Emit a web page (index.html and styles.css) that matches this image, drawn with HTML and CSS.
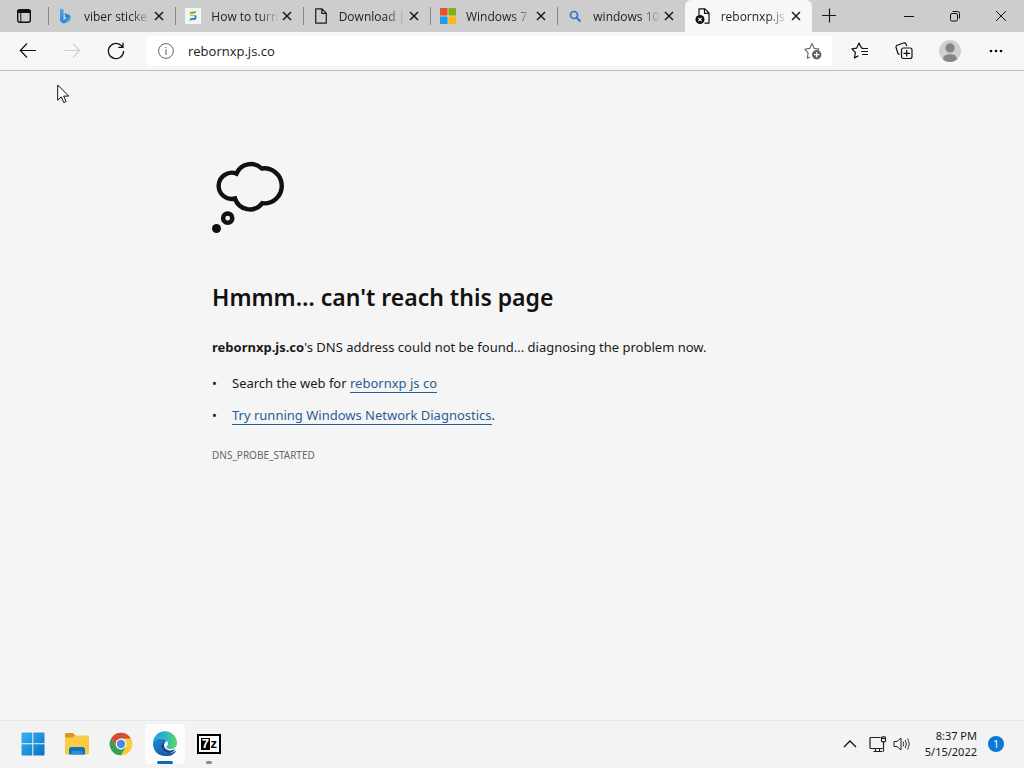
FILE: index.html
```
<!DOCTYPE html>
<html lang="en">
<head>
  <meta charset="UTF-8">
  <meta name="viewport" content="width=device-width, initial-scale=1">
  <title>rebornxp.js.co</title>
  <link rel="stylesheet" href="styles.css">
</head>
<body>

  <!-- Shared icons -->
  <svg class="sprite" aria-hidden="true">
    <symbol id="x" viewBox="0 0 10 10"><path d="M1 1l8 8M9 1l-8 8" fill="none" stroke="#1a1a1a" stroke-width="1.5"/></symbol>
  </svg>

  <!-- Tab strip -->
  <header class="tab-strip">
    <button class="tab-actions" aria-label="Tab actions">
      <svg width="16" height="16" viewBox="0 0 16 16"><rect x="1.7" y="1.7" width="12.6" height="12.6" rx="2" fill="none" stroke="#111" stroke-width="1.4"/><path d="M1.5 2.5h13v2h-13zM4.8 5v9" fill="#111" stroke="#111" stroke-width="1"/></svg>
    </button>

    <nav class="tabs">
      <div class="tab">
        <svg class="favicon" viewBox="0 0 16 16">
          <defs><linearGradient id="bing" x1="0" y1="0" x2="1" y2="1"><stop offset="0" stop-color="#4aaef2"/><stop offset=".6" stop-color="#1f83e4"/><stop offset="1" stop-color="#4fd0ee"/></linearGradient></defs>
          <path d="M2 .5l3.500 1.200v9.800L3 13.400l-1-.8zM6.500 5l4.700 1.700c1.600.8 2 2.800 1.300 4.500-.6 1.600-2 2.300-3.400 3.100-1.700 1-2.700 1.400-4.100 1l-2.500-1.700 4.600-2.400 1.500-1.300-1.500-1.200z" fill="url(#bing)"/>
        </svg>
        <a class="tab-title" href="#">viber sticke</a>
        <button class="tab-close" aria-label="Close tab"><svg width="10" height="10"><use href="#x"/></svg></button>
      </div>
      <div class="tab">
        <svg class="favicon" viewBox="0 0 16 16"><path d="M0 0h16v16H0z" fill="#f3f5f3"/><path d="M5 4l6-.8-.5 2-5 .8z" fill="#46b26b"/><path d="M4.200 5l1.800-.5-.5 2.200 5 .3.800 1.500-6-.5z" fill="#f5ad2b"/><path d="M10.200 7l1.500 1-.7 3.500-6.500 1 .5-2 4.500-.7z" fill="#2485d0"/></svg>
        <a class="tab-title" href="#">How to turn</a>
        <button class="tab-close" aria-label="Close tab"><svg width="10" height="10"><use href="#x"/></svg></button>
      </div>
      <div class="tab">
        <svg class="favicon" viewBox="0 0 16 16"><path d="M3 .8h6l4.300 4.300v10H2.700V1zM8.800 1v4.400h4.400" fill="none" stroke="#1a1a1a" stroke-width="1.2" stroke-linejoin="round"/></svg>
        <a class="tab-title" href="#">Download |</a>
        <button class="tab-close" aria-label="Close tab"><svg width="10" height="10"><use href="#x"/></svg></button>
      </div>
      <div class="tab">
        <svg class="favicon" viewBox="0 0 16 16"><path d="M0 0h7.500v7.500H0z" fill="#e8532b"/><path d="M8.500 0H16v7.500H8.500z" fill="#7fae16"/><path d="M0 8.500h7.500V16H0z" fill="#1aa0e6"/><path d="M8.500 8.500H16V16H8.500z" fill="#fdb913"/></svg>
        <a class="tab-title" href="#">Windows 7</a>
        <button class="tab-close" aria-label="Close tab"><svg width="10" height="10"><use href="#x"/></svg></button>
      </div>
      <div class="tab">
        <svg class="favicon" viewBox="0 0 16 16"><circle cx="7" cy="7" r="3.500" fill="none" stroke="#2f72d0" stroke-width="1.700"/><path d="M9.500 9.500l4 4" stroke="#2f72d0" stroke-width="2"/></svg>
        <a class="tab-title" href="#">windows 10</a>
        <button class="tab-close" aria-label="Close tab"><svg width="10" height="10"><use href="#x"/></svg></button>
      </div>
      <div class="tab active">
        <svg class="favicon" viewBox="0 0 16 16"><path d="M4 7V.8h6l4 4.200v10.200h-4.500M9.500 1v4.400H14" fill="none" stroke="#111" stroke-width="1.200" stroke-linejoin="round"/><circle cx="5" cy="11.500" r="4.500" fill="#111"/><path d="M3.400 9.900l3.200 3.200M6.600 9.900l-3.200 3.200" stroke="#fff" stroke-width="1.200"/></svg>
        <a class="tab-title" href="#">rebornxp.js</a>
        <button class="tab-close" aria-label="Close tab"><svg width="10" height="10"><use href="#x"/></svg></button>
      </div>
    </nav>

    <button class="new-tab" aria-label="New tab"><svg width="16" height="16" viewBox="0 0 16 16"><path d="M1 7.500h14M8.500 .5v14" stroke="#1a1a1a" stroke-width="1.200"/></svg></button>

    <div class="window-controls">
      <button aria-label="Minimize"><svg width="12" height="12" viewBox="0 0 12 12"><path d="M1 6.500h10" stroke="#111"/></svg></button>
      <button aria-label="Restore"><svg width="12" height="12" viewBox="0 0 12 12"><rect x="1.500" y="3.500" width="7" height="7.500" rx="1.500" fill="none" stroke="#111"/><path d="M3.500 1.500h5a2 2 0 0 1 2 2v5" fill="none" stroke="#111"/></svg></button>
      <button aria-label="Close"><svg width="12" height="12" viewBox="0 0 12 12"><path d="M1 1l10 10M11 1L1 11" stroke="#111"/></svg></button>
    </div>
  </header>

  <!-- Toolbar -->
  <div class="toolbar">
    <button class="tool" aria-label="Back"><svg width="18" height="18" viewBox="0 0 18 18"><path d="M17 8.500H1.500M8 1.500l-6.700 7 6.700 7" fill="none" stroke="#111" stroke-width="1.200"/></svg></button>
    <button class="tool" aria-label="Forward" disabled><svg width="18" height="18" viewBox="0 0 18 18"><path d="M1 8.500h15.500M10 1.500l6.700 7-6.700 7" fill="none" stroke="#d0d0d0" stroke-width="1.200"/></svg></button>
    <button class="tool" aria-label="Refresh"><svg width="18" height="18" viewBox="0 0 18 18"><path d="M16.600 9a7.600 7.600 0 1 1-2.700-5.800l1.800 1.600M16 .8v4.500h-4.700" fill="none" stroke="#111" stroke-width="1.300"/></svg></button>

    <div class="address-bar">
      <svg width="16" height="16" viewBox="0 0 16 16"><circle cx="8" cy="8" r="7.400" fill="none" stroke="#666"/><path d="M8 6.500v5.500M8 4v1.300" stroke="#777" stroke-width="1.200"/></svg>
      <input type="text" value="rebornxp.js.co" aria-label="Address">
      <button class="favorite-add" aria-label="Add to favorites">
        <svg width="18" height="18" viewBox="0 0 18 18"><path d="M6 15l-2.700 1.200.8-5.400L.8 7.200l4.900-.8L8 1.500l2.300 4.900 4.700.6-1.500 1.700" fill="none" stroke="#666" stroke-width="1.100" stroke-linejoin="round"/><circle cx="12.700" cy="12.700" r="4.700" fill="#606060"/><path d="M10 12.700h5.400M12.700 10v5.400" stroke="#fff" stroke-width="1.200"/></svg>
      </button>
    </div>

    <button class="tool" aria-label="Favorites"><svg width="18" height="18" viewBox="0 0 18 18"><path d="M11.500 5.500L10 5.200 8 1 5.700 6.100.9 6.900l3.500 3.600-.9 5.400 4-2.200M10.500 6.500H17M10 9.500h7M11 12.500h6" fill="none" stroke="#111" stroke-width="1.200" stroke-linejoin="round"/></svg></button>
    <button class="tool" aria-label="Collections"><svg width="18" height="18" viewBox="0 0 18 18"><path d="M4.500 12.500L3 11.500 1.100 5.500q-.4-1.700 1.200-2.300L8.500 1q1.800-.5 2.500 1l.8 2" fill="none" stroke="#111" stroke-width="1.200"/><rect x="6.500" y="6" width="10.500" height="10.500" rx="2" fill="none" stroke="#111" stroke-width="1.200"/><path d="M8.500 11.300h6.500M11.700 8v6.500" stroke="#111" stroke-width="1.200"/></svg></button>
    <button class="tool profile" aria-label="Profile"><svg width="22" height="22" viewBox="0 0 22 22"><circle cx="11" cy="11" r="11" fill="#d0d0ce"/><circle cx="11" cy="8" r="4.700" fill="#868684"/><path d="M4 19.500q0-5.200 7-5.200t7 5.200q-3 2.500-7 2.500t-7-2.500z" fill="#868684"/></svg></button>
    <button class="tool" aria-label="Settings and more"><svg width="14" height="4" viewBox="0 0 14 4"><circle cx="2" cy="2" r="1.300"/><circle cx="7" cy="2" r="1.300"/><circle cx="12" cy="2" r="1.300"/></svg></button>
  </div>

  <!-- Error page -->
  <main>
    <div class="error">
      <svg width="74" height="72" viewBox="0 0 74 72">
        <path d="M23 37.500A13.100 13.100 0 1 1 24.500 12.600A15.600 15.600 0 0 1 49.700 7.500A17.500 17.500 0 1 1 50.300 42.200A15.600 15.600 0 0 1 23 37.500z" fill="none" stroke="#111" stroke-width="4.400"/>
        <circle cx="15.700" cy="57.200" r="4.600" fill="none" stroke="#111" stroke-width="4.500"/>
        <circle cx="4.500" cy="67.500" r="4.500" fill="#111"/>
      </svg>
      <h1>Hmmm… can't reach this page</h1>
      <p><strong>rebornxp.js.co</strong>'s DNS address could not be found... diagnosing the problem now.</p>
      <ul>
        <li>Search the web for <a href="#">rebornxp js co</a></li>
        <li><a href="#">Try running Windows Network Diagnostics</a>.</li>
      </ul>
      <div class="error-code">DNS_PROBE_STARTED</div>
    </div>
  </main>

  <!-- Taskbar -->
  <footer class="taskbar">
    <button class="app" aria-label="Start"><svg width="24" height="24" viewBox="0 0 24 24"><defs><linearGradient id="win" x1="0" y1="0" x2="1" y2="1"><stop offset="0" stop-color="#38b5ee"/><stop offset="1" stop-color="#0870c8"/></linearGradient></defs><path d="M.5 1.500q0-1 1-1h9.800v10.800H.5zM12.300.5h10.200q1 0 1 1v9.800H12.300zM.5 12.300h10.800v11.200H1.500q-1 0-1-1zM12.300 12.300h11.200v10.200q0 1-1 1H12.300z" fill="url(#win)"/></svg></button>
    <button class="app" aria-label="File Explorer"><svg width="26" height="24" viewBox="0 0 26 24"><path d="M1 2.500Q1 1 2.500 1H9l2.500 2.500L9 6H1z" fill="#d69a20"/><path d="M1 5.500h8L11 3.500h12.500q1.500 0 1.500 1.500v16q0 1.500-1.500 1.500h-21Q1 22.500 1 21z" fill="#fbcb45"/><path d="M5 22.500v-5q0-2.500 2.500-2.500h11q2.500 0 2.500 2.500v5z" fill="#1272bc"/><path d="M7.500 22.500v-2q0-1.500 1.500-1.500h8q1.500 0 1.500 1.500v2z" fill="#2b91d4"/></svg></button>
    <button class="app" aria-label="Chrome"><svg width="24" height="24" viewBox="0 0 24 24"><circle cx="12" cy="12" r="11.300" fill="#fbcb3b"/><path d="M2.200 6.300A11.300 11.300 0 0 1 21.800 6.400H12L7.200 14.800z" fill="#d64b3f"/><path d="M2.200 6.300A11.300 11.300 0 0 0 12 23.300l4.900-8.500L12 17.600 7.200 14.800z" fill="#36a154"/><circle cx="12" cy="12" r="5.400" fill="#fff"/><circle cx="12" cy="12" r="4.200" fill="#4c88e8"/></svg></button>
    <button class="app current" aria-label="Microsoft Edge"><svg width="26" height="26" viewBox="0 0 26 26">
      <defs>
        <linearGradient id="edge-top" x1="0" y1=".5" x2="1" y2=".5"><stop offset="0" stop-color="#229bd8"/><stop offset=".55" stop-color="#2bb9c6"/><stop offset="1" stop-color="#65d65b"/></linearGradient>
        <linearGradient id="edge-low" x1="0" y1="0" x2="1" y2="1"><stop offset="0" stop-color="#1c8ad4"/><stop offset="1" stop-color="#134d98"/></linearGradient>
      </defs>
      <path d="M1 12.500A12 12 0 0 1 25 12c0 4-3 6-6.500 6-2.500 0-4-1-4-2s1.500-1.500 1.500-3.500c0-2.500-3-5-7-5C5 7.500 2 9.500 1 12.500z" fill="url(#edge-top)"/>
      <path d="M1 13c0-3 3.500-5.500 7.500-5.500 3 0 5.500 1 6.800 3-4-.5-6.300 2-6.300 5 0 4 4 6.500 8 6.500 2.500 0 4.500-.8 6-1.800.6-.3 1 .2.600.7A12 12 0 0 1 13 25C6 25 1 19.500 1 13z" fill="url(#edge-low)"/>
      <path d="M9 15.500c0-2.500 1.800-5 5-5-4 3-1.500 8.500 3.500 8.900 2.700.2 4.500-.5 6-1.400-1.500 2.500-4 4-6.500 4-4 0-8-2.500-8-6.500z" fill="#12488d"/>
    </svg></button>
    <button class="app running" aria-label="7-Zip"><span class="sevenzip"><b>7</b><i>z</i></span></button>

    <div class="tray">
      <button aria-label="Show hidden icons"><svg width="14" height="8" viewBox="0 0 14 8"><path d="M1 7l6-6 6 6" fill="none" stroke="#111" stroke-width="1.300"/></svg></button>
      <button aria-label="Network"><svg width="18" height="16" viewBox="0 0 18 16"><path d="M11.500 1.500H2q-1 0-1 1v9q0 1 1 1h11.500M4.500 15.500h9M6.500 12.500v3M10.500 12.500v3M14.500 6v9.500" fill="none" stroke="#222" stroke-width="1.200"/><rect x="12.500" y=".8" width="4" height="5" rx="1" fill="none" stroke="#222" stroke-width="1.200"/><path d="M13 2.500h3" stroke="#222"/></svg></button>
      <button aria-label="Volume"><svg width="18" height="16" viewBox="0 0 18 16"><path d="M1 5.500h3L8 2v12l-4-3.500H1z" fill="none" stroke="#222" stroke-linejoin="round"/><path d="M10 5.500q1.500 2.500 0 5M12.200 4q2.500 4 0 8M14.500 2.500q3.300 5.500 0 11" fill="none" stroke="#333"/></svg></button>
      <div class="clock">
        <span>8:37 PM</span>
        <span>5/15/2022</span>
      </div>
      <span class="badge">1</span>
    </div>
  </footer>

  <!-- Mouse pointer -->
  <svg class="pointer" width="13" height="20" viewBox="0 0 13 20"><path d="M.7 1v15.200l3.600-3.300 2.500 5.700 2.300-1-2.400-5.500h5z" fill="#fff" stroke="#111"/></svg>

</body>
</html>
```
FILE: styles.css
```
* {
  box-sizing: border-box;
}

body {
  margin: 0;
  min-height: 100vh;
  display: flex;
  flex-direction: column;
  font-family: "Noto Sans", "Open Sans", sans-serif;
  font-size: 12px;
  color: #1a1a1a;
  background-color: #f5f5f5;
}

button {
  display: flex;
  align-items: center;
  justify-content: center;
  padding: 0;
  border: none;
  background: none;
  font-family: inherit;
}

svg {
  flex-shrink: 0;
}

.sprite {
  position: absolute;
  width: 0;
  height: 0;
}

/* Tab strip */
.tab-strip {
  display: flex;
  height: 32px;
  background-color: #cdcdcd;
}

.tab-actions {
  width: 48px;
}

.tabs {
  display: flex;
  flex: 0 1 764px;
  min-width: 0;
}

.tab {
  display: flex;
  flex: 1;
  align-items: center;
  min-width: 0;
  padding: 0 8px 0 10px;
  background: linear-gradient(#888, #888) left center / 1px 18px no-repeat;
}

.tab.active {
  background: #f7f7f7;
  border-radius: 6px 6px 0 0;
}

.favicon {
  width: 16px;
  height: 16px;
  margin-right: 10px;
}

.tab-title {
  flex: 1;
  min-width: 0;
  overflow: hidden;
  white-space: nowrap;
  font-family: "Open Sans", sans-serif;
  color: #222;
  text-decoration: none;
  mask-image: linear-gradient(to right, #000 70%, transparent);
}

.tab-close {
  width: 16px;
  height: 16px;
}

.new-tab {
  width: 34px;
}

.window-controls {
  display: flex;
  margin-left: auto;
}

.window-controls button {
  width: 46px;
}

/* Toolbar */
.toolbar {
  display: flex;
  align-items: center;
  gap: 4px;
  height: 39px;
  padding: 0 8px;
  background-color: #f7f7f7;
  border-bottom: 1px solid #bdbdbd;
}

.tool {
  width: 40px;
  height: 30px;
}

.profile {
  width: 44px;
}

.address-bar {
  display: flex;
  flex: 1;
  align-items: center;
  height: 30px;
  margin: 0 4px 0 6px;
  padding: 0 10px 0 12px;
  border-radius: 4px;
  background-color: #fff;
}

.address-bar input {
  flex: 1;
  min-width: 0;
  padding: 0 14px;
  border: none;
  outline: none;
  background: none;
  font-family: "Open Sans", sans-serif;
  font-size: 13px;
  color: #1a1a1a;
}

/* Error page */
main {
  flex: 1;
  padding: 90px 20px 20px;
}

.error {
  max-width: 600px;
  margin: 0 auto;
  font-size: 13px;
  line-height: 20px;
}

.error svg {
  display: block;
}

h1 {
  margin: 48px 0 24px;
  font-size: 23px;
  font-weight: 600;
  line-height: 32px;
  color: #111;
}

p {
  margin: 0 0 16px;
}

ul {
  margin: 0;
  padding: 0;
  list-style: none;
}

li {
  margin-bottom: 12px;
}

li::before {
  content: "•";
  display: inline-block;
  width: 20px;
}

li a {
  color: #2b5c94;
  text-decoration: none;
  border-bottom: 1px solid #1f5f9f;
}

.error-code {
  margin-top: 20px;
  font-size: 10px;
  color: #666;
}

/* Taskbar */
.taskbar {
  display: flex;
  align-items: center;
  gap: 4px;
  height: 48px;
  padding: 0 20px 1px 13px;
  background-color: #f3f3f3;
  border-top: 1px solid #e8e8e8;
}

.app {
  position: relative;
  width: 40px;
  height: 40px;
  border-radius: 4px;
}

.app.current {
  background-color: #fdfdfd;
}

.app.current::after,
.app.running::after {
  content: "";
  position: absolute;
  bottom: 0;
  width: 16px;
  height: 3px;
  border-radius: 2px;
  background-color: #0b6cbd;
}

.app.running::after {
  width: 6px;
  background-color: #888;
}

.sevenzip {
  display: flex;
  align-items: center;
  gap: 1px;
  width: 24px;
  height: 20px;
  padding: 2px;
  border: 2px solid #000;
  background-color: #fff;
  color: #000;
  font-family: "Liberation Sans", sans-serif;
  font-size: 13px;
  font-weight: bold;
  line-height: 12px;
}

.sevenzip b {
  width: 9px;
  background-color: #000;
  color: #fff;
}

.sevenzip i {
  font-style: normal;
}

.tray {
  display: flex;
  align-items: center;
  gap: 6px;
  margin-left: auto;
}

.tray button {
  width: 18px;
  height: 24px;
}

.tray button:first-child {
  margin-right: 4px;
}

.clock {
  display: flex;
  flex-direction: column;
  align-items: flex-end;
  margin: 0 5px 0 8px;
  font-size: 11px;
  line-height: 16px;
}

.badge {
  width: 16px;
  height: 16px;
  border-radius: 50%;
  background-color: #0a78d4;
  color: #fff;
  font-size: 10px;
  line-height: 16px;
  text-align: center;
}

.pointer {
  position: absolute;
  top: 84px;
  left: 57px;
}
```
